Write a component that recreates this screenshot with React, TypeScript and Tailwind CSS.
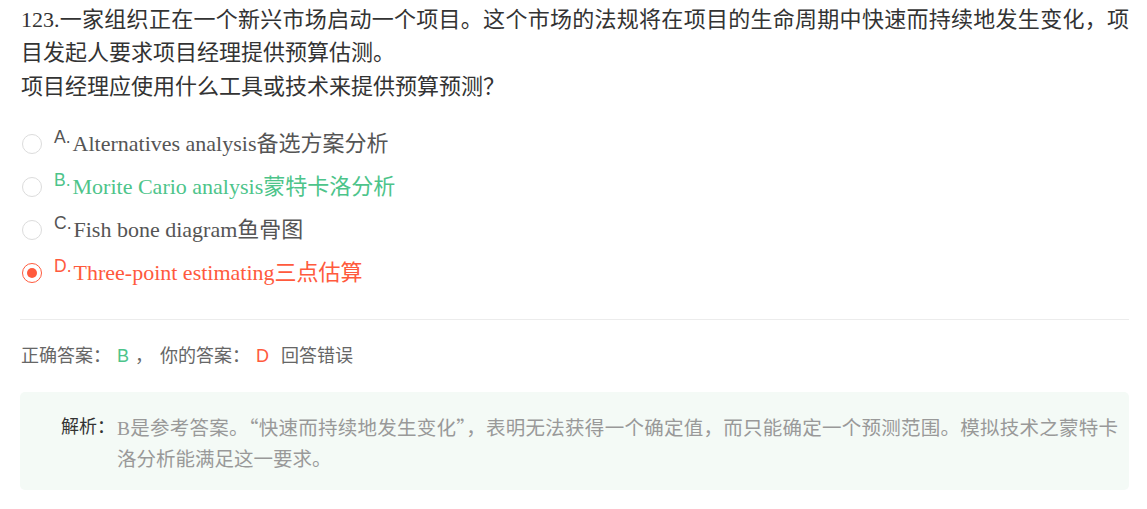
import React from "react";

const serif = "font-['Liberation_Serif','Noto_Sans_CJK_SC',serif]";
const sans = "font-['Liberation_Sans','Noto_Sans_CJK_SC',sans-serif]";
const cjk = "font-['Noto_Sans_CJK_SC',sans-serif]";

const options = [
  { key: "A", text: "Alternatives analysis备选方案分析", tone: "normal" },
  { key: "B", text: "Morite Cario analysis蒙特卡洛分析", tone: "right" },
  { key: "C", text: "Fish bone diagram鱼骨图", tone: "normal" },
  { key: "D", text: "Three-point estimating三点估算", tone: "wrong" },
];

const Radio = ({ checked }: { checked: boolean }) =>
  checked ? (
    <div className="w-[20px] h-[20px] rounded-full border-[1.5px] border-[#ff5a3d] flex items-center justify-center shrink-0">
      <div className="w-[10px] h-[10px] rounded-full bg-[#ff5a3d]" />
    </div>
  ) : (
    <div className="w-[20px] h-[20px] rounded-full border-[1.5px] border-[#dcdcdc] shrink-0" />
  );

export default function App() {
  return (
    <div className="w-[1147px] h-[509px] bg-white px-[21px] pt-[3px]">
      {/* Question */}
      <div className={`${serif} text-[22px] leading-[33px] text-[#333] w-[1108px]`}>
        <p className="text-justify">
          123.一家组织正在一个新兴市场启动一个项目。这个市场的法规将在项目的生命周期中快速而持续地发生变化，项目发起人要求项目经理提供预算估测。
        </p>
        <p className="mt-[1px]">项目经理应使用什么工具或技术来提供预算预测？</p>
      </div>

      {/* Options */}
      <div className="mt-[19px] flex flex-col">
        {options.map((o) => {
          const color =
            o.tone === "right"
              ? "text-[#4dc48a]"
              : o.tone === "wrong"
              ? "text-[#ff5a3d]"
              : "text-[#555]";
          return (
            <div key={o.key} className="h-[43px] flex items-center pl-[1px]">
              <Radio checked={o.tone === "wrong"} />
              <div className={`ml-[12px] flex items-start ${color}`}>
                <span className={`${sans} text-[17.5px] leading-[17px] -mt-[2px]`}>
                  {o.key}.
                </span>
                <span className={`${serif} text-[22px] leading-[26px] ml-[2px]`}>{o.text}</span>
              </div>
            </div>
          );
        })}
      </div>

      {/* Divider */}
      <div className="mt-[25px] h-px bg-[#ececec] w-[1109px] -ml-px" />

      {/* Answer */}
      <div className={`${sans} text-[18px] leading-[24px] text-[#666] mt-[24px] flex items-center`}>
        <span>正确答案：</span>
        <span className="text-[#4dc48a] ml-[6px]">B</span>
        <span className="ml-[6px]">，</span>
        <span className="ml-[7px]">你的答案：</span>
        <span className="text-[#ff5a3d] ml-[6px]">D</span>
        <span className="ml-[12px]">回答错误</span>
      </div>

      {/* Explanation */}
      <div className="mt-[24px] -ml-px w-[1109px] h-[98px] rounded-[5px] bg-[#f4faf6] pl-[41px] pr-[11px] pt-[20px] flex">
        <span className={`${sans} text-[18px] leading-[28px] text-[#333] shrink-0 mt-[1px]`}>解析：</span>
        <p className={`${cjk} text-[19.5px] leading-[29px] text-[#999] text-justify ml-[2px]`}>
          <span className={serif}>B</span>是参考答案。“快速而持续地发生变化”，表明无法获得一个确定值，而只能确定一个预测范围。模拟技术之蒙特卡洛分析能满足这一要求。
        </p>
      </div>
    </div>
  );
}
